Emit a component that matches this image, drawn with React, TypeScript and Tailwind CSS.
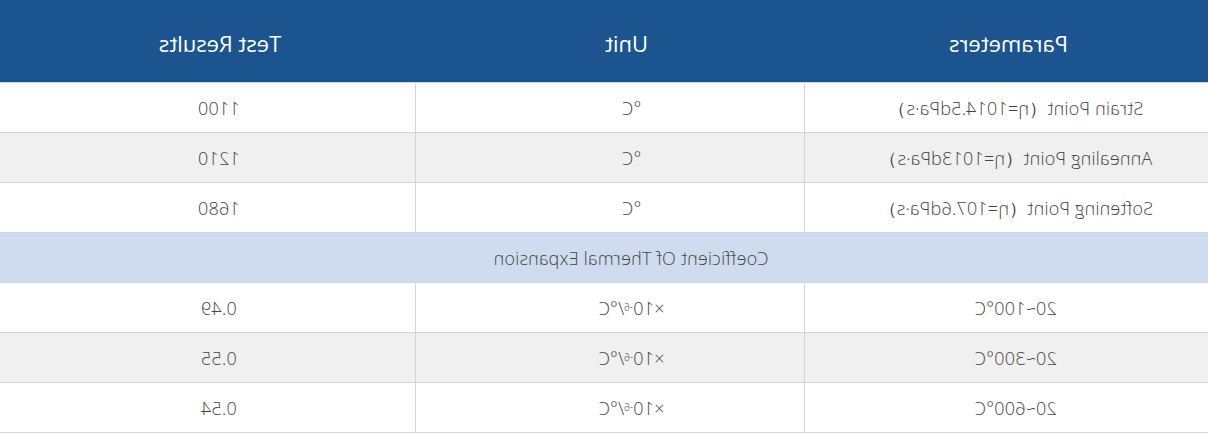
const rows: { p: string; u: React.ReactNode; r: string }[] = [
  { p: 'Strain Point（η=1014.5dPa·s）', u: '°C', r: '1100' },
  { p: 'Annealing Point（η=1013dPa·s）', u: '°C', r: '1210' },
  { p: 'Softening Point（η=107.6dPa·s）', u: '°C', r: '1680' },
];

const cte = [
  { p: '20~100°C', r: '0.49' },
  { p: '20~300°C', r: '0.55' },
  { p: '20~600°C', r: '0.54' },
];

const unit = (
  <span>
    ×10<sup className="text-[10px] top-[-0.35em] tracking-normal">-6</sup>/°C
  </span>
);

const pads = ['pr-[18px]', 'pr-[42px]', 'pr-[22px]'];

function Cell({ children, col }: { children: React.ReactNode; col: number }) {
  return (
    <td className={`h-[50px] pt-[2px] border-b border-[#d4d4d4] text-center align-middle ${pads[col]} ${col === 2 ? '' : 'border-r'}`}>
      {children}
    </td>
  );
}

export default function App() {
  return (
    <div className="w-[1208px] h-[434px] bg-white -scale-x-100" style={{ fontFamily: '"Open Sans", "Noto Sans", sans-serif' }}>
      <table className="w-full border-collapse table-fixed text-[18px] tracking-[0.2px] font-light text-[#444]">
        <colgroup>
          <col className="w-[403px]" />
          <col className="w-[389px]" />
          <col className="w-[416px]" />
        </colgroup>
        <thead>
          <tr className="bg-[#1b548e] text-white text-[22px] tracking-normal">
            <th className="h-[82px] pt-[6px] pr-[4px] font-normal border-b border-[#d4d4d4]">Parameters</th>
            <th className="h-[82px] pt-[6px] pr-[32px] font-normal border-b border-[#d4d4d4]">Unit</th>
            <th className="h-[82px] pt-[6px] pr-[24px] font-normal border-b border-[#d4d4d4]">Test Results</th>
          </tr>
        </thead>
        <tbody>
          {rows.map((row, i) => (
            <tr key={row.p} className={i % 2 === 1 ? 'bg-[#f0f0f0]' : 'bg-white'}>
              <Cell col={0}>{row.p}</Cell>
              <Cell col={1}>{row.u}</Cell>
              <Cell col={2}>{row.r}</Cell>
            </tr>
          ))}
          <tr className="bg-[#cfdcf0]">
            <td colSpan={3} className="h-[50px] pt-[2px] pr-[54px] border-b border-[#d4d4d4] text-center">
              Coefficient Of Thermal Expansion
            </td>
          </tr>
          {cte.map((row, i) => (
            <tr key={row.p} className={i % 2 === 1 ? 'bg-[#f0f0f0]' : 'bg-white'}>
              <Cell col={0}>{row.p}</Cell>
              <Cell col={1}>{unit}</Cell>
              <Cell col={2}>{row.r}</Cell>
            </tr>
          ))}
        </tbody>
      </table>
    </div>
  );
}
